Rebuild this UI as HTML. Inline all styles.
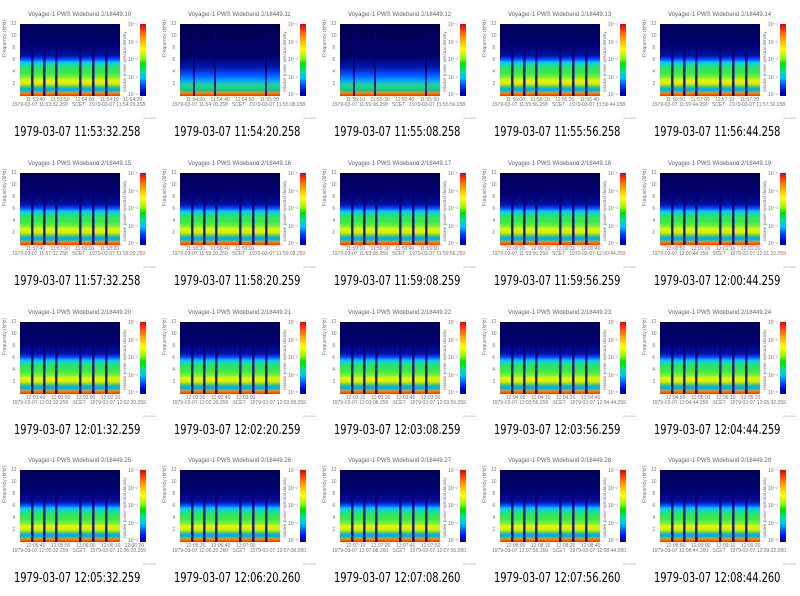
<!DOCTYPE html>
<html><head><meta charset="utf-8"><style>
*{margin:0;padding:0;box-sizing:border-box}
body{width:800px;height:596px;background:#fff;position:relative;overflow:hidden;font-family:"Liberation Sans",sans-serif}
.c{position:absolute;width:160px;height:149px}
.t{position:absolute;left:28px;top:12px;width:100px;font-size:6px;color:#666;white-space:nowrap;text-align:center}
.p{position:absolute;left:20px;top:24px;width:100px;height:72px;
background:
linear-gradient(to right,transparent 0,transparent 11%,rgba(0,0,110,.85) 11%,rgba(0,0,110,.85) 13.5%,transparent 13.5%,transparent 23%,rgba(0,0,110,.85) 23%,rgba(0,0,110,.85) 25.5%,transparent 25.5%,transparent 35%,rgba(0,0,110,.85) 35%,rgba(0,0,110,.85) 37.5%,transparent 37.5%,transparent 59%,rgba(0,0,110,.85) 59%,rgba(0,0,110,.85) 61.5%,transparent 61.5%,transparent 72%,rgba(0,0,110,.85) 72%,rgba(0,0,110,.85) 74.5%,transparent 74.5%,transparent 85%,rgba(0,0,110,.85) 85%,rgba(0,0,110,.85) 87.5%,transparent 87.5%),
linear-gradient(to bottom,#000058 0,#000070 30%,#0010a8 44%,#0050ff 49%,#00c8ff 53%,#20e080 57%,#40e840 68%,#80f030 74%,#f0f000 78%,#c8f010 83%,#40d080 87%,#10a0ff 90%,#00c0c0 93%,#ff9000 95%,#ff3000 100%)}
.p.d{background:
linear-gradient(to right,transparent 0,transparent 13%,rgba(0,0,110,.8) 13%,rgba(0,0,110,.8) 15%,transparent 15%,transparent 34%,rgba(0,0,110,.8) 34%,rgba(0,0,110,.8) 36%,transparent 36%,transparent 85%,rgba(0,0,110,.8) 85%,rgba(0,0,110,.8) 87%,transparent 87%),
linear-gradient(to bottom,#000050 0,#000068 45%,#0018b0 60%,#0050ff 70%,#00a0ff 78%,#20d0a0 84%,#30d060 89%,#00c0c0 92%,#ff9000 95%,#ff3000 100%)}
.cb{position:absolute;left:140px;top:24px;width:6px;height:72px;background:linear-gradient(to bottom,#e00000 0,#ff6000 12%,#ffb000 22%,#ffff00 35%,#80ff00 48%,#00e000 55%,#00e0a0 65%,#00c0ff 75%,#0040ff 85%,#0000c0 95%,#000080 100%)}
.yl{position:absolute;left:11px;font-size:5px;color:#777;line-height:5px}
.yt{position:absolute;left:2px;top:57px;font-size:5px;color:#777;transform:rotate(-90deg);transform-origin:0 0;white-space:nowrap}
.rt{position:absolute;left:122px;top:92px;font-size:4.5px;color:#777;transform:rotate(-90deg);transform-origin:0 0;white-space:nowrap}
.cl{position:absolute;left:128px;font-size:5px;color:#777;line-height:5px}
.xl{position:absolute;left:12px;top:98px;width:115px;font-size:5px;color:#777;line-height:5px;white-space:pre}
.sm{position:absolute;left:143px;top:116px;font-size:3px;color:#999}
.cap{position:absolute;left:14px;top:125px;font-size:14px;color:#000;white-space:nowrap;transform:scaleX(.79);transform-origin:0 0;font-family:"DejaVu Sans","Liberation Sans",sans-serif;font-size:13.3px;transform:scaleX(.74)}
</style></head><body>

<div class="c" style="left:0;top:0"><div class="t">Voyager-1 PWS Wideband 2/18449.10</div><div class="p"></div><div class="cb"></div><div class="yl" style="top:22px">12</div><div class="yl" style="top:34px">10</div><div class="yl" style="top:46px">&nbsp;8</div><div class="yl" style="top:58px">&nbsp;6</div><div class="yl" style="top:70px">&nbsp;4</div><div class="yl" style="top:82px">&nbsp;2</div><div class="yt">Frequency (kHz)</div><div class="rt">relative power spectral density</div><div class="cl" style="top:23px">10⁻¹</div><div class="cl" style="top:41px">10⁻²</div><div class="cl" style="top:58px">10⁻³</div><div class="cl" style="top:76px">10⁻⁴</div><div class="cl" style="top:93px">10⁻⁵</div><div class="xl">          11:53:40    11:53:50    11:54:00    11:54:10   11:54:20
1979-03-07 11:53:32.258   SCET   1979-03-07 11:54:20.258</div><div class="sm">xxx.xxxxx</div><div class="cap">1979-03-07 11:53:32.258</div></div>

<div class="c" style="left:160px;top:0"><div class="t">Voyager-1 PWS Wideband 2/18449.11</div><div class="p d"></div><div class="cb"></div><div class="yl" style="top:22px">12</div><div class="yl" style="top:34px">10</div><div class="yl" style="top:46px">&nbsp;8</div><div class="yl" style="top:58px">&nbsp;6</div><div class="yl" style="top:70px">&nbsp;4</div><div class="yl" style="top:82px">&nbsp;2</div><div class="yt">Frequency (kHz)</div><div class="rt">relative power spectral density</div><div class="cl" style="top:23px">10⁻¹</div><div class="cl" style="top:41px">10⁻²</div><div class="cl" style="top:58px">10⁻³</div><div class="cl" style="top:76px">10⁻⁴</div><div class="cl" style="top:93px">10⁻⁵</div><div class="xl">          11:54:20    11:54:40    11:54:50    11:55:00
1979-03-07 11:54:20.258   SCET   1979-03-07 11:55:08.258</div><div class="sm">xxx.xxxxx</div><div class="cap">1979-03-07 11:54:20.258</div></div>

<div class="c" style="left:320px;top:0"><div class="t">Voyager-1 PWS Wideband 2/18449.12</div><div class="p d"></div><div class="cb"></div><div class="yl" style="top:22px">12</div><div class="yl" style="top:34px">10</div><div class="yl" style="top:46px">&nbsp;8</div><div class="yl" style="top:58px">&nbsp;6</div><div class="yl" style="top:70px">&nbsp;4</div><div class="yl" style="top:82px">&nbsp;2</div><div class="yt">Frequency (kHz)</div><div class="rt">relative power spectral density</div><div class="cl" style="top:23px">10⁻¹</div><div class="cl" style="top:41px">10⁻²</div><div class="cl" style="top:58px">10⁻³</div><div class="cl" style="top:76px">10⁻⁴</div><div class="cl" style="top:93px">10⁻⁵</div><div class="xl">          11:55:10    11:55:30    11:55:40    11:55:50
1979-03-07 11:55:08.258   SCET   1979-03-07 11:55:56.258</div><div class="sm">xxx.xxxxx</div><div class="cap">1979-03-07 11:55:08.258</div></div>

<div class="c" style="left:480px;top:0"><div class="t">Voyager-1 PWS Wideband 2/18449.13</div><div class="p"></div><div class="cb"></div><div class="yl" style="top:22px">12</div><div class="yl" style="top:34px">10</div><div class="yl" style="top:46px">&nbsp;8</div><div class="yl" style="top:58px">&nbsp;6</div><div class="yl" style="top:70px">&nbsp;4</div><div class="yl" style="top:82px">&nbsp;2</div><div class="yt">Frequency (kHz)</div><div class="rt">relative power spectral density</div><div class="cl" style="top:23px">10⁻¹</div><div class="cl" style="top:41px">10⁻²</div><div class="cl" style="top:58px">10⁻³</div><div class="cl" style="top:76px">10⁻⁴</div><div class="cl" style="top:93px">10⁻⁵</div><div class="xl">          11:56:00    11:56:10    11:56:20    11:56:40
1979-03-07 11:55:56.258   SCET   1979-03-07 11:56:44.258</div><div class="sm">xxx.xxxxx</div><div class="cap">1979-03-07 11:55:56.258</div></div>

<div class="c" style="left:640px;top:0"><div class="t">Voyager-1 PWS Wideband 2/18449.14</div><div class="p"></div><div class="cb"></div><div class="yl" style="top:22px">12</div><div class="yl" style="top:34px">10</div><div class="yl" style="top:46px">&nbsp;8</div><div class="yl" style="top:58px">&nbsp;6</div><div class="yl" style="top:70px">&nbsp;4</div><div class="yl" style="top:82px">&nbsp;2</div><div class="yt">Frequency (kHz)</div><div class="rt">relative power spectral density</div><div class="cl" style="top:23px">10⁻¹</div><div class="cl" style="top:41px">10⁻²</div><div class="cl" style="top:58px">10⁻³</div><div class="cl" style="top:76px">10⁻⁴</div><div class="cl" style="top:93px">10⁻⁵</div><div class="xl">          11:56:50    11:57:00    11:57:10    11:57:20
1979-03-07 11:56:44.258   SCET   1979-03-07 11:57:32.258</div><div class="sm">xxx.xxxxx</div><div class="cap">1979-03-07 11:56:44.258</div></div>

<div class="c" style="left:0;top:149px"><div class="t">Voyager-1 PWS Wideband 2/18449.15</div><div class="p"></div><div class="cb"></div><div class="yl" style="top:22px">12</div><div class="yl" style="top:34px">10</div><div class="yl" style="top:46px">&nbsp;8</div><div class="yl" style="top:58px">&nbsp;6</div><div class="yl" style="top:70px">&nbsp;4</div><div class="yl" style="top:82px">&nbsp;2</div><div class="yt">Frequency (kHz)</div><div class="rt">relative power spectral density</div><div class="cl" style="top:23px">10⁻¹</div><div class="cl" style="top:41px">10⁻²</div><div class="cl" style="top:58px">10⁻³</div><div class="cl" style="top:76px">10⁻⁴</div><div class="cl" style="top:93px">10⁻⁵</div><div class="xl">          11:57:40    11:57:50    11:58:00    11:58:20
1979-03-07 11:57:32.258   SCET   1979-03-07 11:58:20.259</div><div class="sm">xxx.xxxxx</div><div class="cap">1979-03-07 11:57:32.258</div></div>

<div class="c" style="left:160px;top:149px"><div class="t">Voyager-1 PWS Wideband 2/18449.16</div><div class="p"></div><div class="cb"></div><div class="yl" style="top:22px">12</div><div class="yl" style="top:34px">10</div><div class="yl" style="top:46px">&nbsp;8</div><div class="yl" style="top:58px">&nbsp;6</div><div class="yl" style="top:70px">&nbsp;4</div><div class="yl" style="top:82px">&nbsp;2</div><div class="yt">Frequency (kHz)</div><div class="rt">relative power spectral density</div><div class="cl" style="top:23px">10⁻¹</div><div class="cl" style="top:41px">10⁻²</div><div class="cl" style="top:58px">10⁻³</div><div class="cl" style="top:76px">10⁻⁴</div><div class="cl" style="top:93px">10⁻⁵</div><div class="xl">          11:58:30    11:58:40    11:59:00
1979-03-07 11:58:20.259   SCET   1979-03-07 11:59:08.259</div><div class="sm">xxx.xxxxx</div><div class="cap">1979-03-07 11:58:20.259</div></div>

<div class="c" style="left:320px;top:149px"><div class="t">Voyager-1 PWS Wideband 2/18449.17</div><div class="p"></div><div class="cb"></div><div class="yl" style="top:22px">12</div><div class="yl" style="top:34px">10</div><div class="yl" style="top:46px">&nbsp;8</div><div class="yl" style="top:58px">&nbsp;6</div><div class="yl" style="top:70px">&nbsp;4</div><div class="yl" style="top:82px">&nbsp;2</div><div class="yt">Frequency (kHz)</div><div class="rt">relative power spectral density</div><div class="cl" style="top:23px">10⁻¹</div><div class="cl" style="top:41px">10⁻²</div><div class="cl" style="top:58px">10⁻³</div><div class="cl" style="top:76px">10⁻⁴</div><div class="cl" style="top:93px">10⁻⁵</div><div class="xl">          11:59:10    11:59:30    11:59:40    11:59:50
1979-03-07 11:59:08.259   SCET   1979-03-07 11:59:56.259</div><div class="sm">xxx.xxxxx</div><div class="cap">1979-03-07 11:59:08.259</div></div>

<div class="c" style="left:480px;top:149px"><div class="t">Voyager-1 PWS Wideband 2/18449.18</div><div class="p"></div><div class="cb"></div><div class="yl" style="top:22px">12</div><div class="yl" style="top:34px">10</div><div class="yl" style="top:46px">&nbsp;8</div><div class="yl" style="top:58px">&nbsp;6</div><div class="yl" style="top:70px">&nbsp;4</div><div class="yl" style="top:82px">&nbsp;2</div><div class="yt">Frequency (kHz)</div><div class="rt">relative power spectral density</div><div class="cl" style="top:23px">10⁻¹</div><div class="cl" style="top:41px">10⁻²</div><div class="cl" style="top:58px">10⁻³</div><div class="cl" style="top:76px">10⁻⁴</div><div class="cl" style="top:93px">10⁻⁵</div><div class="xl">          12:00:00    12:00:20    12:00:30    12:00:40
1979-03-07 11:59:56.259   SCET   1979-03-07 12:00:44.259</div><div class="sm">xxx.xxxxx</div><div class="cap">1979-03-07 11:59:56.259</div></div>

<div class="c" style="left:640px;top:149px"><div class="t">Voyager-1 PWS Wideband 2/18449.19</div><div class="p"></div><div class="cb"></div><div class="yl" style="top:22px">12</div><div class="yl" style="top:34px">10</div><div class="yl" style="top:46px">&nbsp;8</div><div class="yl" style="top:58px">&nbsp;6</div><div class="yl" style="top:70px">&nbsp;4</div><div class="yl" style="top:82px">&nbsp;2</div><div class="yt">Frequency (kHz)</div><div class="rt">relative power spectral density</div><div class="cl" style="top:23px">10⁻¹</div><div class="cl" style="top:41px">10⁻²</div><div class="cl" style="top:58px">10⁻³</div><div class="cl" style="top:76px">10⁻⁴</div><div class="cl" style="top:93px">10⁻⁵</div><div class="xl">          12:00:50    12:01:00    12:01:10    12:01:20
1979-03-07 12:00:44.259   SCET   1979-03-07 12:01:32.259</div><div class="sm">xxx.xxxxx</div><div class="cap">1979-03-07 12:00:44.259</div></div>

<div class="c" style="left:0;top:298px"><div class="t">Voyager-1 PWS Wideband 2/18449.20</div><div class="p"></div><div class="cb"></div><div class="yl" style="top:22px">12</div><div class="yl" style="top:34px">10</div><div class="yl" style="top:46px">&nbsp;8</div><div class="yl" style="top:58px">&nbsp;6</div><div class="yl" style="top:70px">&nbsp;4</div><div class="yl" style="top:82px">&nbsp;2</div><div class="yt">Frequency (kHz)</div><div class="rt">relative power spectral density</div><div class="cl" style="top:23px">10⁻¹</div><div class="cl" style="top:41px">10⁻²</div><div class="cl" style="top:58px">10⁻³</div><div class="cl" style="top:76px">10⁻⁴</div><div class="cl" style="top:93px">10⁻⁵</div><div class="xl">          12:01:40    12:01:50    12:02:00    12:02:20
1979-03-07 12:01:32.259   SCET   1979-03-07 12:02:20.259</div><div class="sm">xxx.xxxxx</div><div class="cap">1979-03-07 12:01:32.259</div></div>

<div class="c" style="left:160px;top:298px"><div class="t">Voyager-1 PWS Wideband 2/18449.21</div><div class="p"></div><div class="cb"></div><div class="yl" style="top:22px">12</div><div class="yl" style="top:34px">10</div><div class="yl" style="top:46px">&nbsp;8</div><div class="yl" style="top:58px">&nbsp;6</div><div class="yl" style="top:70px">&nbsp;4</div><div class="yl" style="top:82px">&nbsp;2</div><div class="yt">Frequency (kHz)</div><div class="rt">relative power spectral density</div><div class="cl" style="top:23px">10⁻¹</div><div class="cl" style="top:41px">10⁻²</div><div class="cl" style="top:58px">10⁻³</div><div class="cl" style="top:76px">10⁻⁴</div><div class="cl" style="top:93px">10⁻⁵</div><div class="xl">          12:02:30    12:02:40    12:03:00
1979-03-07 12:02:20.259   SCET   1979-03-07 12:03:08.259</div><div class="sm">xxx.xxxxx</div><div class="cap">1979-03-07 12:02:20.259</div></div>

<div class="c" style="left:320px;top:298px"><div class="t">Voyager-1 PWS Wideband 2/18449.22</div><div class="p"></div><div class="cb"></div><div class="yl" style="top:22px">12</div><div class="yl" style="top:34px">10</div><div class="yl" style="top:46px">&nbsp;8</div><div class="yl" style="top:58px">&nbsp;6</div><div class="yl" style="top:70px">&nbsp;4</div><div class="yl" style="top:82px">&nbsp;2</div><div class="yt">Frequency (kHz)</div><div class="rt">relative power spectral density</div><div class="cl" style="top:23px">10⁻¹</div><div class="cl" style="top:41px">10⁻²</div><div class="cl" style="top:58px">10⁻³</div><div class="cl" style="top:76px">10⁻⁴</div><div class="cl" style="top:93px">10⁻⁵</div><div class="xl">          12:03:10    12:03:20    12:03:40    12:03:50
1979-03-07 12:03:08.259   SCET   1979-03-07 12:03:56.259</div><div class="sm">xxx.xxxxx</div><div class="cap">1979-03-07 12:03:08.259</div></div>

<div class="c" style="left:480px;top:298px"><div class="t">Voyager-1 PWS Wideband 2/18449.23</div><div class="p"></div><div class="cb"></div><div class="yl" style="top:22px">12</div><div class="yl" style="top:34px">10</div><div class="yl" style="top:46px">&nbsp;8</div><div class="yl" style="top:58px">&nbsp;6</div><div class="yl" style="top:70px">&nbsp;4</div><div class="yl" style="top:82px">&nbsp;2</div><div class="yt">Frequency (kHz)</div><div class="rt">relative power spectral density</div><div class="cl" style="top:23px">10⁻¹</div><div class="cl" style="top:41px">10⁻²</div><div class="cl" style="top:58px">10⁻³</div><div class="cl" style="top:76px">10⁻⁴</div><div class="cl" style="top:93px">10⁻⁵</div><div class="xl">          12:04:00    12:04:10    12:04:20    12:04:40
1979-03-07 12:03:56.259   SCET   1979-03-07 12:04:44.259</div><div class="sm">xxx.xxxxx</div><div class="cap">1979-03-07 12:03:56.259</div></div>

<div class="c" style="left:640px;top:298px"><div class="t">Voyager-1 PWS Wideband 2/18449.24</div><div class="p"></div><div class="cb"></div><div class="yl" style="top:22px">12</div><div class="yl" style="top:34px">10</div><div class="yl" style="top:46px">&nbsp;8</div><div class="yl" style="top:58px">&nbsp;6</div><div class="yl" style="top:70px">&nbsp;4</div><div class="yl" style="top:82px">&nbsp;2</div><div class="yt">Frequency (kHz)</div><div class="rt">relative power spectral density</div><div class="cl" style="top:23px">10⁻¹</div><div class="cl" style="top:41px">10⁻²</div><div class="cl" style="top:58px">10⁻³</div><div class="cl" style="top:76px">10⁻⁴</div><div class="cl" style="top:93px">10⁻⁵</div><div class="xl">          12:04:50    12:05:00    12:05:10    12:05:20
1979-03-07 12:04:44.259   SCET   1979-03-07 12:05:32.259</div><div class="sm">xxx.xxxxx</div><div class="cap">1979-03-07 12:04:44.259</div></div>

<div class="c" style="left:0;top:446px"><div class="t">Voyager-1 PWS Wideband 2/18449.25</div><div class="p"></div><div class="cb"></div><div class="yl" style="top:22px">12</div><div class="yl" style="top:34px">10</div><div class="yl" style="top:46px">&nbsp;8</div><div class="yl" style="top:58px">&nbsp;6</div><div class="yl" style="top:70px">&nbsp;4</div><div class="yl" style="top:82px">&nbsp;2</div><div class="yt">Frequency (kHz)</div><div class="rt">relative power spectral density</div><div class="cl" style="top:23px">10⁻¹</div><div class="cl" style="top:41px">10⁻²</div><div class="cl" style="top:58px">10⁻³</div><div class="cl" style="top:76px">10⁻⁴</div><div class="cl" style="top:93px">10⁻⁵</div><div class="xl">          12:05:40    12:05:50    12:06:00    12:06:10   12:06:20
1979-03-07 12:05:32.259   SCET   1979-03-07 12:06:20.259</div><div class="sm">xxx.xxxxx</div><div class="cap">1979-03-07 12:05:32.259</div></div>

<div class="c" style="left:160px;top:446px"><div class="t">Voyager-1 PWS Wideband 2/18449.26</div><div class="p"></div><div class="cb"></div><div class="yl" style="top:22px">12</div><div class="yl" style="top:34px">10</div><div class="yl" style="top:46px">&nbsp;8</div><div class="yl" style="top:58px">&nbsp;6</div><div class="yl" style="top:70px">&nbsp;4</div><div class="yl" style="top:82px">&nbsp;2</div><div class="yt">Frequency (kHz)</div><div class="rt">relative power spectral density</div><div class="cl" style="top:23px">10⁻¹</div><div class="cl" style="top:41px">10⁻²</div><div class="cl" style="top:58px">10⁻³</div><div class="cl" style="top:76px">10⁻⁴</div><div class="cl" style="top:93px">10⁻⁵</div><div class="xl">          12:06:30    12:06:40    12:07:00
1979-03-07 12:06:20.260   SCET   1979-03-07 12:07:08.260</div><div class="sm">xxx.xxxxx</div><div class="cap">1979-03-07 12:06:20.260</div></div>

<div class="c" style="left:320px;top:446px"><div class="t">Voyager-1 PWS Wideband 2/18449.27</div><div class="p"></div><div class="cb"></div><div class="yl" style="top:22px">12</div><div class="yl" style="top:34px">10</div><div class="yl" style="top:46px">&nbsp;8</div><div class="yl" style="top:58px">&nbsp;6</div><div class="yl" style="top:70px">&nbsp;4</div><div class="yl" style="top:82px">&nbsp;2</div><div class="yt">Frequency (kHz)</div><div class="rt">relative power spectral density</div><div class="cl" style="top:23px">10⁻¹</div><div class="cl" style="top:41px">10⁻²</div><div class="cl" style="top:58px">10⁻³</div><div class="cl" style="top:76px">10⁻⁴</div><div class="cl" style="top:93px">10⁻⁵</div><div class="xl">          12:07:10    12:07:20    12:07:40    12:07:50
1979-03-07 12:07:08.260   SCET   1979-03-07 12:07:56.260</div><div class="sm">xxx.xxxxx</div><div class="cap">1979-03-07 12:07:08.260</div></div>

<div class="c" style="left:480px;top:446px"><div class="t">Voyager-1 PWS Wideband 2/18449.28</div><div class="p"></div><div class="cb"></div><div class="yl" style="top:22px">12</div><div class="yl" style="top:34px">10</div><div class="yl" style="top:46px">&nbsp;8</div><div class="yl" style="top:58px">&nbsp;6</div><div class="yl" style="top:70px">&nbsp;4</div><div class="yl" style="top:82px">&nbsp;2</div><div class="yt">Frequency (kHz)</div><div class="rt">relative power spectral density</div><div class="cl" style="top:23px">10⁻¹</div><div class="cl" style="top:41px">10⁻²</div><div class="cl" style="top:58px">10⁻³</div><div class="cl" style="top:76px">10⁻⁴</div><div class="cl" style="top:93px">10⁻⁵</div><div class="xl">          12:08:00    12:08:10    12:08:20    12:08:40
1979-03-07 12:07:56.260   SCET   1979-03-07 12:08:44.260</div><div class="sm">xxx.xxxxx</div><div class="cap">1979-03-07 12:07:56.260</div></div>

<div class="c" style="left:640px;top:446px"><div class="t">Voyager-1 PWS Wideband 2/18449.29</div><div class="p"></div><div class="cb"></div><div class="yl" style="top:22px">12</div><div class="yl" style="top:34px">10</div><div class="yl" style="top:46px">&nbsp;8</div><div class="yl" style="top:58px">&nbsp;6</div><div class="yl" style="top:70px">&nbsp;4</div><div class="yl" style="top:82px">&nbsp;2</div><div class="yt">Frequency (kHz)</div><div class="rt">relative power spectral density</div><div class="cl" style="top:23px">10⁻¹</div><div class="cl" style="top:41px">10⁻²</div><div class="cl" style="top:58px">10⁻³</div><div class="cl" style="top:76px">10⁻⁴</div><div class="cl" style="top:93px">10⁻⁵</div><div class="xl">          12:08:50    12:09:00    12:09:10    12:09:20
1979-03-07 12:08:44.260   SCET   1979-03-07 12:09:32.260</div><div class="sm">xxx.xxxxx</div><div class="cap">1979-03-07 12:08:44.260</div></div>

</body></html>
